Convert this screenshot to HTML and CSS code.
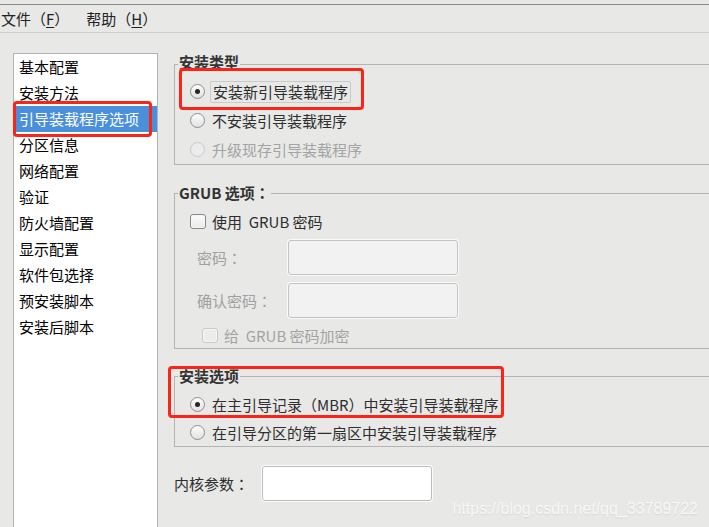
FILE: index.html
```html
<!DOCTYPE html>
<html lang="zh-CN">
<head>
    <meta charset="UTF-8">
    <title>引导装载程序选项</title>
    <link rel="stylesheet" href="styles.css">
</head>
<body>
    <div class="menubar">
        <span class="menu">文件（<u>F</u>）</span>
        <span class="menu">帮助（<u>H</u>）</span>
    </div>

    <div class="main">
        <ul class="steps">
            <li>基本配置</li>
            <li>安装方法</li>
            <li class="current">引导装载程序选项<span class="mark"></span></li>
            <li>分区信息</li>
            <li>网络配置</li>
            <li>验证</li>
            <li>防火墙配置</li>
            <li>显示配置</li>
            <li>软件包选择</li>
            <li>预安装脚本</li>
            <li>安装后脚本</li>
        </ul>

        <div class="panel">
            <!-- install type -->
            <fieldset class="group first">
                <legend>安装类型</legend>
                <div class="opts">
                    <div class="row">
                        <span class="radio checked"></span>
                        <span class="focus">安装新引导装载程序</span>
                        <span class="mark mark-type"></span>
                    </div>
                    <div class="row">
                        <span class="radio"></span>
                        <span class="text">不安装引导装载程序</span>
                    </div>
                    <div class="row disabled">
                        <span class="radio"></span>
                        <span class="text">升级现存引导装载程序</span>
                    </div>
                </div>
            </fieldset>

            <!-- grub -->
            <fieldset class="group grub">
                <legend>GRUB 选项<span class="colon" lang="ja">：</span></legend>
                <div class="opts">
                    <div class="row check-row">
                        <span class="check"></span>
                        <span class="text">使用&nbsp; GRUB 密码</span>
                    </div>
                    <div class="pw-grid">
                        <label>密码<span class="colon" lang="ja">：</span></label>
                        <span class="entry"></span>
                        <label>确认密码<span class="colon" lang="ja">：</span></label>
                        <span class="entry"></span>
                    </div>
                    <div class="row check-row disabled encrypt">
                        <span class="check"></span>
                        <span class="text">给&nbsp; GRUB 密码加密</span>
                    </div>
                </div>
            </fieldset>

            <!-- install options -->
            <fieldset class="group where">
                <legend>安装选项</legend>
                <div class="opts">
                    <span class="mark mark-where"></span>
                    <div class="row">
                        <span class="radio checked"></span>
                        <span class="text">在主引导记录（MBR）中安装引导装载程序</span>
                    </div>
                    <div class="row">
                        <span class="radio"></span>
                        <span class="text">在引导分区的第一扇区中安装引导装载程序</span>
                    </div>
                </div>
            </fieldset>

            <div class="kernel">
                <label>内核参数<span class="colon" lang="ja">：</span></label>
                <span class="entry white"></span>
            </div>
        </div>
    </div>

    <div class="watermark">https://blog.csdn.net/qq_33789722</div>
</body>
</html>
```

FILE: styles.css
```css
* {
    box-sizing: border-box;
}

body {
    margin: 0;
    padding-top: 4px;
    height: 527px;
    overflow: hidden;
    background-color: #e8e8e7;
    color: #2e2e2e;
    font-family: "Noto Sans CJK SC", sans-serif;
    font-size: 15px;
    text-spacing-trim: space-all;
    position: relative;
}

/* centred full-width colon */
.colon {
    font-family: "Noto Sans CJK JP", "Noto Sans CJK TC", sans-serif;
}

/* Menu bar */
.menubar {
    height: 29px;
    border-top: 1px solid #8a8a8a;
    border-bottom: 1px solid #d0d0d0;
    display: flex;
    align-items: center;
    gap: 17px;
    padding-left: 1px;
    color: #222;
}

.menu u {
    text-decoration-thickness: 1px;
    text-underline-offset: 2px;
}

.main {
    display: flex;
    align-items: flex-start;
}

/* Step list */
.steps {
    flex-shrink: 0;
    list-style: none;
    margin: 20px 0 0 13px;
    padding: 0;
    width: 145px;
    height: 500px;
    background-color: #fff;
    border: 1px solid #b3b3b3;
    color: #000;
}

.steps li {
    height: 26px;
    line-height: 26px;
    padding-left: 5px;
    position: relative;
}

.steps li.current {
    background-color: #4a8fd9;
    color: #fff;
}

.mark {
    position: absolute;
    border: 3px solid #fa2419;
    border-radius: 4px;
}

.steps .mark {
    top: -5px;
    bottom: -5px;
    left: -1px;
    right: 5px;
}

/* Right panel */
.panel {
    flex-shrink: 0;
    margin: 21px 0 0 16px;
    width: 560px;
}

.group {
    margin: 0;
    padding: 0;
    border: 1px solid #b4b4b4;
}

.group + .group {
    margin-top: 18px;
}

.group.where {
    margin-top: 17px;
}

.group legend {
    margin-left: 3px;
    padding: 0 1px;
    line-height: 20px;
    font-weight: bold;
    color: #333;
}

.group.first legend {
    line-height: 16px;
    padding-bottom: 4px;
}

.opts {
    padding: 3px 0 0 15px;
    position: relative;
}

.row {
    height: 29px;
    display: flex;
    align-items: center;
    position: relative;
    width: max-content;
}

.where .row {
    height: 28px;
}

.where .opts {
    padding-top: 4px;
}

.radio {
    width: 15px;
    height: 15px;
    border-radius: 50%;
    border: 1px solid #8e8e8e;
    background: linear-gradient(#fdfdfd, #e2e2e2);
    margin-right: 5px;
    position: relative;
}

.radio.checked::after {
    content: "";
    position: absolute;
    top: 4px;
    left: 4px;
    width: 5px;
    height: 5px;
    border-radius: 50%;
    background-color: #262626;
}

.text {
    padding-left: 2px;
}

.focus {
    padding: 0 2px;
    line-height: 20px;
    border: 1px solid #cacaca;
    border-radius: 2px;
}

.mark-type {
    top: -9px;
    bottom: -4px;
    left: -11px;
    right: -13px;
}

.disabled {
    color: #a3a3a3;
}

.disabled .radio,
.disabled .check {
    border-color: #c9c9c9;
    background: #ececec;
}

/* GRUB options */
.grub .opts {
    padding-top: 4px;
}

.check-row {
    height: 28px;
}

.check {
    width: 16px;
    height: 15px;
    border: 1px solid #888;
    border-radius: 3px;
    background: linear-gradient(#fbfbfb, #e9e9e9);
    box-shadow: inset 0 0 0 1px #f6f6f6;
    margin-right: 4px;
}

.pw-grid {
    display: grid;
    grid-template-columns: 91px 170px;
    row-gap: 8px;
    align-items: center;
    margin: 5px 0 4px 7px;
    color: #a0a0a0;
}

.pw-grid label {
    white-space: nowrap;
}

.entry {
    display: block;
    height: 35px;
    border: 1px solid #c3c3c3;
    border-radius: 3px;
    background-color: #f2f2f2;
    box-shadow: 0 0 0 1px #fafafa;
}

.entry.white {
    width: 170px;
    background-color: #fff;
    border-color: #bcbcbc;
}

.encrypt {
    height: 26px;
    margin-left: 12px;
}

.mark-where {
    top: -20px;
    left: -7px;
    width: 336px;
    height: 52px;
}

/* Kernel args */
.kernel {
    display: flex;
    align-items: center;
    margin-top: 19px;
}

.kernel label {
    width: 88px;
    white-space: nowrap;
}

.watermark {
    position: absolute;
    right: 11px;
    bottom: 9px;
    font-family: "Liberation Sans", Arial, sans-serif;
    font-size: 16px;
    color: rgba(255, 255, 255, 0.8);
    text-shadow: 0 1px 1px rgba(0, 0, 0, 0.08);
}
```
